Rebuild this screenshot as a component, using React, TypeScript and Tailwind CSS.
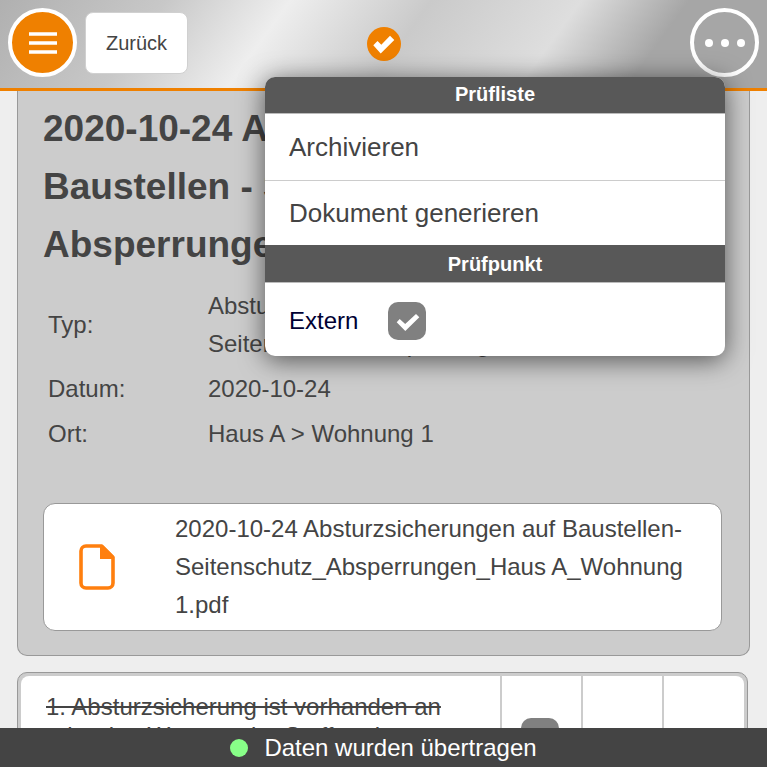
import React from "react";

const facts = [
  {
    label: "Typ:",
    value: "Absturzsicherungen auf Baustellen - Seitenschutz - Absperrungen",
  },
  { label: "Datum:", value: "2020-10-24" },
  { label: "Ort:", value: "Haus A > Wohnung 1" },
];

const CheckBox = ({ id, label }: { id: string; label?: string }) => (
  <span className="relative flex w-[38px] h-[38px] shrink-0">
    <input
      id={id}
      type="checkbox"
      defaultChecked
      aria-label={label}
      className="w-full h-full appearance-none rounded-[10px] bg-[#808080]"
    />
    <svg
      viewBox="0 0 38 38"
      className="absolute inset-0 pointer-events-none"
      aria-hidden="true"
    >
      <path d="M8.700 20.300l3-3.300 5.500 5L28 12l3.300 3.300L17.300 29z" fill="#fff" />
    </svg>
  </span>
);

const Header = () => (
  <header className="shrink-0 grid grid-cols-[1fr_auto_1fr] items-center h-[91px] px-2 pb-[3px] border-b-[3px] border-[#ef8000] bg-[linear-gradient(126deg,#b0b0b0_0%,#c8c8c8_20%,#eeeeee_35%,#cacaca_52%,#dedede_70%,#a6a6a6_83%,#a6a6a6_100%)]">
    <div className="flex items-center gap-2">
      <button
        type="button"
        aria-label="Menü"
        className="flex items-center justify-center w-[69px] h-[69px] rounded-full border-4 border-white bg-[#ef8000]"
      >
        <svg viewBox="0 0 28 22" className="w-7 h-[22px]" aria-hidden="true">
          <path d="M0 2h28M0 11h28M0 20h28" stroke="#fff" strokeWidth="3.5" />
        </svg>
      </button>
      <button
        type="button"
        className="h-[62px] px-5 rounded-lg border border-[#d0d0d0] bg-white text-xl"
      >
        Zurück
      </button>
    </div>
    <span className="mt-0.5 w-[34px] h-[34px] rounded-full bg-[#ef8000]">
      <svg viewBox="0 0 34 34" aria-hidden="true">
        <path d="M6.300 18.300l4.200-4.200 3.800 3.700 8.700-9.100 4.300 4.300-13.600 13.600z" fill="#fff" />
      </svg>
    </span>
    <button
      type="button"
      aria-label="Mehr"
      className="justify-self-end flex items-center justify-center gap-2 w-[69px] h-[69px] rounded-full border-4 border-white"
    >
      <span className="w-2 h-2 rounded-full bg-white" />
      <span className="w-2 h-2 rounded-full bg-white" />
      <span className="w-2 h-2 rounded-full bg-white" />
    </button>
  </header>
);

const Menu = () => (
  <div className="absolute top-[77px] right-[42px] w-[460px] rounded-[10px] overflow-hidden bg-white shadow-[0_4px_26px_rgba(0,0,0,0.6)]">
    <h2 className="h-[37px] border-b border-[#bbb] bg-[#585858] text-white text-center text-xl leading-[35px] font-bold">
      Prüfliste
    </h2>
    <button
      type="button"
      className="block w-full h-[67px] px-6 border-b border-[#ccc] text-left text-[26px]"
    >
      Archivieren
    </button>
    <button
      type="button"
      className="block w-full h-16 px-6 text-left text-[26px]"
    >
      Dokument generieren
    </button>
    <h2 className="h-[38px] border-b border-[#bbb] bg-[#585858] text-white text-center text-xl leading-[38px] font-bold">
      Prüfpunkt
    </h2>
    <div className="flex items-center gap-[30px] h-[73px] pt-0.5 px-6">
      <label htmlFor="extern" className="text-2xl text-[#000033]">
        Extern
      </label>
      <CheckBox id="extern" />
    </div>
  </div>
);

const App = () => {
  return (
    <div className="relative flex flex-col h-screen overflow-hidden bg-[#eee] text-[#444] font-['Liberation_Sans',Arial,sans-serif]">
      <Header />
      <main className="flex-1 min-h-0 overflow-hidden px-[17px]">
        <section className="pl-[25px] pr-[27px] pt-[9px] pb-6 rounded-b-[10px] border border-t-0 border-[#999] bg-[#ccc]">
          <h1 className="text-[37px] leading-[58px] font-bold">
            2020-10-24 Absturzsicherungen auf Baustellen - Seitenschutz -
            Absperrungen
          </h1>
          <table className="w-full mt-2.5 text-2xl leading-[38px]">
            <tbody>
              {facts.map((fact) => (
                <tr key={fact.label}>
                  <th
                    scope="row"
                    className="w-[160px] px-[5px] pt-[3px] pb-1 text-left font-normal"
                  >
                    {fact.label}
                  </th>
                  <td className="pl-[5px] pr-[90px] pt-[3px] pb-1">
                    {fact.value}
                  </td>
                </tr>
              ))}
            </tbody>
          </table>
          <a
            href="#pdf"
            className="flex items-center mt-[46px] py-1.5 pl-[35px] pr-4 rounded-xl border border-[#999] bg-white text-2xl leading-[38px]"
          >
            <svg
              viewBox="0 0 36 46"
              className="w-9 h-[46px] mr-[60px] shrink-0"
              aria-hidden="true"
            >
              <path
                d="M7 2h15.500l11.500 11.500V39a5 5 0 0 1-5 5H7a5 5 0 0 1-5-5V7a5 5 0 0 1 5-5z"
                fill="none"
                stroke="#ff7f0e"
                strokeWidth="3.6"
              />
              <path d="M21 1h3l11 11v3H21z" fill="#ff7f0e" />
            </svg>
            <span>
              2020-10-24 Absturzsicherungen auf Baustellen-
              <wbr />
              Seitenschutz_Absperrungen_Haus A_Wohnung 1.pdf
            </span>
          </a>
        </section>
        <section className="mt-4 mr-0.5 p-[3px] rounded-[10px] border border-[#999] bg-[#ccc]">
          <div className="grid grid-cols-[1fr_81px_81px_80px] h-[120px] rounded-lg overflow-hidden bg-white divide-x-2 divide-[#ccc]">
            <p className="pl-[25px] pr-8 pt-4 text-2xl leading-[29px] line-through">
              1. Absturzsicherung ist vorhanden an oder den Wegen oder Stoffen
              der
            </p>
            <div className="flex items-start justify-center pt-[42px] pr-1">
              <CheckBox id="point-1" label="Prüfpunkt 1" />
            </div>
            <div />
            <div />
          </div>
        </section>
      </main>
      <footer className="shrink-0 flex items-center justify-center gap-4 h-[39px] bg-[#444] text-white text-2xl">
        <span className="w-[18px] h-[18px] rounded-full bg-[#88ff88]" />
        Daten wurden übertragen
      </footer>
      <Menu />
    </div>
  );
};

export default App;
